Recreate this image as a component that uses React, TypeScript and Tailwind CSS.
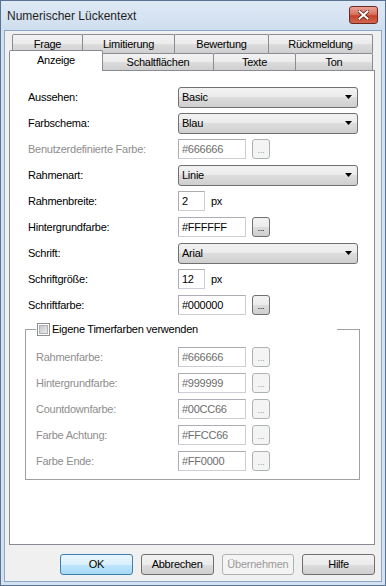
import React from "react";

const FONT = "font-['Liberation_Sans',Arial,sans-serif]";
const BTN_BG =
  "bg-[linear-gradient(#f2f2f2,#ebebeb_50%,#dddddd_50%,#cfcfcf)]";

function Arrow() {
  return (
    <svg width="7" height="4" viewBox="0 0 7 4">
      <path d="M0 0h7L3.5 4z" fill="#000" />
    </svg>
  );
}

function Select({ value }: { value: string }) {
  return (
    <div
      className={`h-[21px] w-[180px] rounded-[3px] border border-[#707070] ${BTN_BG} flex items-center justify-between pl-[3px] pr-[5px]`}
    >
      <span>{value}</span>
      <Arrow />
    </div>
  );
}

function TextBox({
  value,
  width = "w-[68px]",
  disabled = false,
}: {
  value: string;
  width?: string;
  disabled?: boolean;
}) {
  return (
    <div
      className={`h-[20px] ${width} border border-[#abadb3] border-b-[#cdcfd4] border-r-[#cdcfd4] bg-white flex items-center pl-[3px] ${
        disabled ? "text-[#6d6d6d]" : "text-black"
      }`}
    >
      {value}
    </div>
  );
}

function DotsButton({ disabled = false }: { disabled?: boolean }) {
  return (
    <div
      className={`ml-[6px] h-[20px] w-[18px] rounded-[3px] border flex items-end justify-center pb-[3px] text-[9px] leading-none ${
        disabled
          ? "border-[#adb2b5] bg-[#f4f4f4] text-[#9a9a9a]"
          : `border-[#707070] ${BTN_BG} text-black`
      }`}
    >
      ...
    </div>
  );
}

function Row({
  label,
  disabled = false,
  labelWidth = "w-[150px]",
  children,
}: {
  label: string;
  disabled?: boolean;
  labelWidth?: string;
  children: React.ReactNode;
}) {
  return (
    <div className="h-[20px] flex items-center">
      <div className={`${labelWidth} ${disabled ? "text-[#8e8e8e]" : "text-black"}`}>
        {label}
      </div>
      {children}
    </div>
  );
}

function Tab({
  label,
  width,
  first = false,
}: {
  label: string;
  width: string;
  first?: boolean;
}) {
  return (
    <div
      className={`${width} h-full ${first ? "" : "-ml-px"} rounded-t-[2px] border border-b-0 border-[#898c95] ${BTN_BG} flex items-center justify-center`}
    >
      {label}
    </div>
  );
}

function ActionButton({
  label,
  primary = false,
  disabled = false,
}: {
  label: string;
  primary?: boolean;
  disabled?: boolean;
}) {
  const cls = disabled
    ? "border-[#adb2b5] bg-[#f4f4f4] text-[#9a9a9a]"
    : primary
      ? "border-[#3c7fb1] bg-[linear-gradient(#eaf6fd,#d9f0fc_50%,#bee6fd_50%,#a7d9f5)] text-black"
      : `border-[#707070] ${BTN_BG} text-black`;
  return (
    <div
      className={`w-[73px] h-[21px] rounded-[3px] border ${cls} flex items-center justify-center`}
    >
      {label}
    </div>
  );
}

const timerColors = [
  ["Rahmenfarbe:", "#666666"],
  ["Hintergrundfarbe:", "#999999"],
  ["Countdownfarbe:", "#00CC66"],
  ["Farbe Achtung:", "#FFCC66"],
  ["Farbe Ende:", "#FF0000"],
];

export default function App() {
  return (
    <div
      className={`${FONT} text-[11px] tracking-[-0.25px] w-[386px] h-[586px] border border-[#5a7394] bg-[#d3e1f1] flex flex-col`}
    >
      {/* title bar */}
      <div className="h-[29px] shrink-0 flex items-center justify-between pl-[6px] pr-[7px] bg-[linear-gradient(#dfe9f5,#cfdeef)]">
        <span className="text-[12px] tracking-normal text-[#1e1e1e]">
          Numerischer Lückentext
        </span>
        <div className="w-[29px] h-[18px] -mt-[2px] rounded-[3px] border border-[#6d2a24] bg-[linear-gradient(#e8a396,#d9735f_45%,#c4432b_55%,#d2674e)] flex items-center justify-center">
          <svg width="11" height="10" viewBox="0 0 11 10">
            <path
              d="M1.5 1.5l8 7M9.5 1.5l-8 7"
              stroke="#5a1e16"
              strokeWidth="3.6"
              strokeLinecap="square"
            />
            <path
              d="M1.5 1.5l8 7M9.5 1.5l-8 7"
              stroke="#fff"
              strokeWidth="2"
              strokeLinecap="square"
            />
          </svg>
        </div>
      </div>

      {/* client area */}
      <div className="flex-1 mx-[3px] mb-[3px] border border-[#8ba6c6] bg-[#f0f0f0] pl-[4px] pt-[3px]">
        {/* tabs */}
        <div className="w-[366px]">
          <div className="h-[19px] flex pl-[3px]">
            <Tab label="Frage" width="w-[71px]" first />
            <Tab label="Limitierung" width="w-[93px]" />
            <Tab label="Bewertung" width="w-[95px]" />
            <Tab label="Rückmeldung" width="w-[105px]" />
          </div>
          <div className="h-[17px] flex items-end">
            <div className="relative z-10 w-[94px] h-[21px] -mb-px rounded-t-[2px] border border-b-0 border-[#898c95] bg-white flex items-center justify-center pb-[2px]">
              Anzeige
            </div>
            <Tab label="Schaltflächen" width="w-[112px]" />
            <Tab label="Texte" width="w-[83px]" />
            <Tab label="Ton" width="w-[78px]" />
          </div>

          {/* panel */}
          <div className="h-[475px] border border-[#898c95] bg-white pl-[15px] pt-[16px]">
            <div className="flex flex-col gap-[6px] pl-[3px]">
              <Row label="Aussehen:">
                <Select value="Basic" />
              </Row>
              <Row label="Farbschema:">
                <Select value="Blau" />
              </Row>
              <Row label="Benutzerdefinierte Farbe:" disabled>
                <TextBox value="#666666" disabled />
                <DotsButton disabled />
              </Row>
              <Row label="Rahmenart:">
                <Select value="Linie" />
              </Row>
              <Row label="Rahmenbreite:">
                <TextBox value="2" width="w-[27px]" />
                <span className="ml-[6px]">px</span>
              </Row>
              <Row label="Hintergrundfarbe:">
                <TextBox value="#FFFFFF" />
                <DotsButton />
              </Row>
              <Row label="Schrift:">
                <Select value="Arial" />
              </Row>
              <Row label="Schriftgröße:">
                <TextBox value="12" width="w-[27px]" />
                <span className="ml-[6px]">px</span>
              </Row>
              <Row label="Schriftfarbe:">
                <TextBox value="#000000" />
                <DotsButton />
              </Row>
            </div>

            {/* timer colours group */}
            <fieldset className="mt-[7px] w-[335px] border border-[#a0a0a0] pl-[10px] pb-[8px]">
              <legend className="w-[301px] h-[14px] flex items-center gap-[2px] pl-[1px]">
                <span className="w-[13px] h-[13px] border border-[#8f8f8f] bg-white p-px">
                  <span className="block w-full h-full border border-[#b0b4b9] bg-[linear-gradient(135deg,#c4c8cd,#eaeaeb)]" />
                </span>
                <span className="text-black">Eigene Timerfarben verwenden</span>
              </legend>
              <div className="mt-[11px] flex flex-col gap-[6px]">
                {timerColors.map(([label, value]) => (
                  <Row key={label} label={label} labelWidth="w-[142px]" disabled>
                    <TextBox value={value} disabled />
                    <DotsButton disabled />
                  </Row>
                ))}
              </div>
            </fieldset>
          </div>

          {/* dialog buttons */}
          <div className="mt-[9px] flex gap-[8px] pl-[51px]">
            <ActionButton label="OK" primary />
            <ActionButton label="Abbrechen" />
            <ActionButton label="Übernehmen" disabled />
            <ActionButton label="Hilfe" />
          </div>
        </div>
      </div>
    </div>
  );
}
